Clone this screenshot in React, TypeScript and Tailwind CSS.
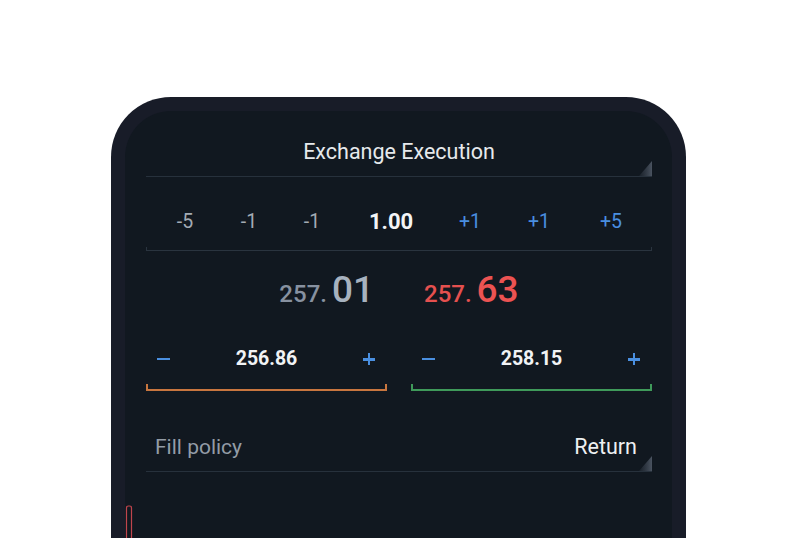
import { ReactNode } from "react";

const font = { fontFamily: "Roboto, 'Noto Sans', sans-serif" };

function Corner() {
  return (
    <svg className="absolute right-0 bottom-0" width="13" height="15" viewBox="0 0 13 15">
      <defs>
        <linearGradient id="cornerFade" x1="0" y1="0" x2="1" y2="0">
          <stop offset="0" stopColor="#3a4350" stopOpacity="0.2" />
          <stop offset="1" stopColor="#4a5360" />
        </linearGradient>
      </defs>
      <polygon points="13,0 13,15 0,15" fill="url(#cornerFade)" />
    </svg>
  );
}

function Underlined({ children, className }: { children: ReactNode; className?: string }) {
  return (
    <div className={`relative border-b border-[#27313c] ${className ?? ""}`}>
      {children}
      <Corner />
    </div>
  );
}

function Stepper({ value, color }: { value: string; color: string }) {
  return (
    <div className="flex-1 flex flex-col">
      <div className="flex items-center justify-between h-[26px] pl-[11px] pr-[12px]">
        <span className="block w-[13px] h-[2.5px] bg-[#4a8fe0]" />
        <span className="text-[19.5px] font-bold text-[#f1f3f5] leading-none">{value}</span>
        <span className="relative block w-[12px] h-[12px]">
          <span className="absolute left-0 top-[5px] w-[12px] h-[2.5px] bg-[#4a8fe0]" />
          <span className="absolute left-[5px] top-0 w-[2.5px] h-[12px] bg-[#4a8fe0]" />
        </span>
      </div>
      <div className={`mt-[12px] h-[7px] border-b-2 border-l-2 border-r-2 ${color}`} />
    </div>
  );
}

export default function App() {
  const steps = [
    { label: "-5", cls: "text-[#a3abb4]" },
    { label: "-1", cls: "text-[#a3abb4]" },
    { label: "-1", cls: "text-[#a3abb4]" },
    { label: "1.00", cls: "text-[#f3f4f6] font-bold text-[22px]" },
    { label: "+1", cls: "text-[#4a8fe0]" },
    { label: "+1", cls: "text-[#4a8fe0]" },
    { label: "+5", cls: "text-[#4a8fe0]" },
  ];

  return (
    <div className="w-[800px] h-[538px] overflow-hidden bg-white pt-[97px] pl-[111px]" style={font}>
      <div className="w-[575px] h-[460px] rounded-t-[60px] bg-[#181c28] px-[14px] pt-[14px]">
        <div className="h-full rounded-t-[46px] bg-[#111820] flex flex-col">
          <div className="pl-[21px] pr-[20px] pt-[28px]">
            <Underlined className="pb-[11px]">
              <div className="text-center text-[21.5px] leading-[26px] text-[#e6e9ec]">
                Exchange Execution
              </div>
            </Underlined>

            <div className="mt-[33px] grid grid-cols-[78px_50px_76px_82px_76px_62px_82px] items-center">
              {steps.map((s, i) => (
                <div key={i} className={`text-center text-[19.5px] leading-[24px] ${s.cls}`}>
                  {s.label}
                </div>
              ))}
            </div>
            <div className="mt-[13px] h-[4px] border-b border-l border-r border-[#2a343f]" />

            <div className="mt-[20px] flex justify-center items-baseline gap-[50px] h-[40px]">
              <div className="flex items-baseline">
                <span className="text-[24px] font-medium text-[#8791a0] leading-none">257.</span>
                <span className="ml-[5px] text-[37px] font-medium text-[#a7b2bf] leading-none">01</span>
              </div>
              <div className="flex items-baseline">
                <span className="text-[24px] font-medium text-[#e5504f] leading-none">257.</span>
                <span className="ml-[5px] text-[37px] font-medium text-[#ec5352] leading-none">63</span>
              </div>
            </div>

            <div className="mt-[35px] flex gap-[24px]">
              <Stepper value="256.86" color="border-[#c8763f]" />
              <Stepper value="258.15" color="border-[#3f9a5a]" />
            </div>

            <Underlined className="mt-[43px] pb-[11px] pl-[9px] pr-[15px]">
              <div className="flex items-center justify-between text-[21px] leading-[26px]">
                <span className="text-[#939ca6]">Fill policy</span>
                <span className="text-[#eef0f2] text-[21.5px]">Return</span>
              </div>
            </Underlined>
          </div>

          <div className="mt-[33px]">
            <svg width="8" height="40" viewBox="0 0 8 40">
              <path
                d="M1.5 40 L1.5 3 Q1.5 1 3.5 1 L4.5 1 Q6.5 1 6.5 3 L6.5 40"
                fill="none"
                stroke="#c0454d"
                strokeWidth="1.2"
              />
            </svg>
          </div>
        </div>
      </div>
    </div>
  );
}
